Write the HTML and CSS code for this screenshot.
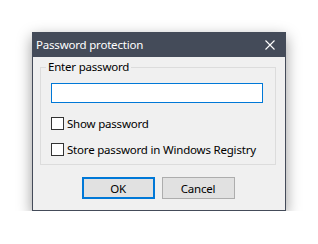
FILE: index.html
```html
<!DOCTYPE html>
<html lang="en">
<head>
  <meta charset="UTF-8">
  <title>Password protection</title>
  <link rel="stylesheet" href="styles.css">
</head>
<body>
  <div class="dialog">
    <div class="titlebar">
      <span class="title">Password protection</span>
      <svg class="close" width="10" height="10" viewBox="0 0 10 10">
        <path d="M0.5 0.5 L9.5 9.5 M9.5 0.5 L0.5 9.5" stroke="#fff" stroke-width="1.1" fill="none"/>
      </svg>
    </div>

    <div class="content">
      <fieldset class="group">
        <legend>Enter password</legend>
        <input class="password" type="password">
        <label class="check"><span class="box"></span>Show password</label>
        <label class="check second"><span class="box"></span>Store password in Windows Registry</label>
      </fieldset>

      <div class="buttons">
        <button class="btn default">OK</button>
        <button class="btn">Cancel</button>
      </div>
    </div>
  </div>
</body>
</html>
```

FILE: styles.css
```css
body {
  margin: 0;
  background: #fff;
  font-family: "Noto Sans", "Open Sans", sans-serif;
  font-size: 11.5px;
  letter-spacing: -0.2px;
  color: #000;
}

.dialog {
  margin: 32px 0 0 32px;
  width: 252px;
  border: 1px solid #444b59;
  background: #f0f0f0;
  box-shadow: 0 5px 14px rgba(0, 0, 0, 0.4);
}

/* Title bar */
.titlebar {
  height: 24px;
  background: #444b59;
  display: flex;
  align-items: center;
  justify-content: space-between;
  padding: 0 10px 0 3px;
}

.title {
  color: #fff;
  line-height: 16px;
  white-space: nowrap;
}

.close {
  display: block;
}

/* Body */
.content {
  padding: 0 9px 11px 7px;
}

.group {
  margin: 2px 0 0 0;
  padding: 8px 12px 8px 10px;
  border: 1px solid #dcdcdc;
}

.group legend {
  padding: 0 2px;
  margin-left: -5px;
  line-height: 16px;
}

.password {
  display: block;
  box-sizing: border-box;
  width: 100%;
  height: 20px;
  margin: 0;
  border: 1px solid #0078d7;
  background: #fff;
  outline: none;
}

.check {
  display: flex;
  align-items: center;
  gap: 3px;
  height: 13px;
  margin-top: 14px;
  line-height: 13px;
  white-space: nowrap;
}

.check.second {
  margin-top: 13px;
}

.box {
  box-sizing: border-box;
  width: 13px;
  height: 13px;
  border: 1px solid #333;
  background: #fff;
  flex: none;
}

.buttons {
  display: flex;
  justify-content: center;
  gap: 7px;
  margin-top: 12px;
}

.btn {
  box-sizing: border-box;
  width: 73px;
  height: 22px;
  padding: 0;
  font-family: inherit;
  font-size: inherit;
  letter-spacing: inherit;
  color: #000;
  background: #e1e1e1;
  border: 1px solid #adadad;
}

.btn.default {
  border: 2px solid #0078d7;
}
```
